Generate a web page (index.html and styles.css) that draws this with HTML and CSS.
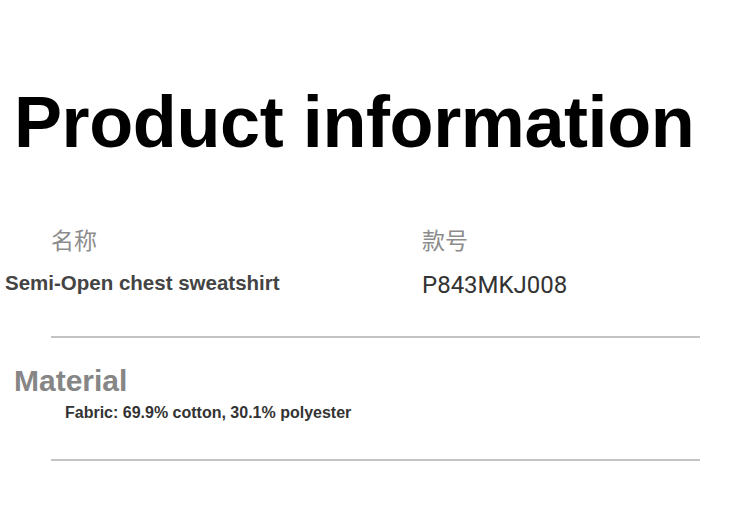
FILE: index.html
```html
<!DOCTYPE html>
<html lang="en">
<head>
<meta charset="utf-8">
<link rel="stylesheet" href="styles.css">
</head>
<body>
<main class="page">
  <h1 class="title">Product information</h1>
  <section class="info">
    <div class="col col-name">
      <div class="label">名称</div>
      <div class="value value-name">Semi-Open chest sweatshirt</div>
    </div>
    <div class="col col-code">
      <div class="label">款号</div>
      <div class="value value-code">P843MKJ008</div>
    </div>
  </section>
  <hr class="rule rule-top">
  <section class="material">
    <h2 class="material-title">Material</h2>
    <p class="material-text">Fabric: 69.9% cotton, 30.1% polyester</p>
  </section>
  <hr class="rule">
</main>
</body>
</html>
```

FILE: styles.css
```css
* { box-sizing: border-box; }
html, body { margin: 0; padding: 0; background: #fff; }
body { font-family: "Liberation Sans", Arial, sans-serif; }
.page { width: 750px; height: 532px; padding-top: 82px; }
.title {
  margin: 0 0 0 14px;
  font-size: 72px;
  font-weight: bold;
  line-height: 80px;
  color: #000;
  letter-spacing: -0.4px;
}
.info { display: flex; margin-top: 62px; }
.col { display: flex; flex-direction: column; }
.col-name { width: 422px; }
.label {
  font-family: "Noto Sans CJK SC", sans-serif;
  font-size: 23px;
  line-height: 30px;
  color: #8c8c8c;
}
.col-name .label { margin-left: 51px; }
.value { line-height: 24px; }
.value-name {
  margin: 17px 0 0 5px;
  font-weight: bold;
  font-size: 20.5px;
  color: #444;
}
.value-code {
  margin-top: 19px;
  font-family: Roboto, "Liberation Sans", sans-serif;
  font-size: 24px;
  color: #333;
}
.rule {
  margin: 0 50px 0 51px;
  border: 0;
  height: 2px;
  background: #c4c4c4;
}
.rule-top { margin-top: 39px; }
.material { padding: 27px 0 37px; }
.material-title {
  margin: 0 0 0 14px;
  font-size: 30px;
  font-weight: bold;
  color: #868686;
  line-height: 32px;
}
.material-text {
  margin: 7px 0 0 65px;
  font-size: 16px;
  font-weight: bold;
  color: #333;
}
```
